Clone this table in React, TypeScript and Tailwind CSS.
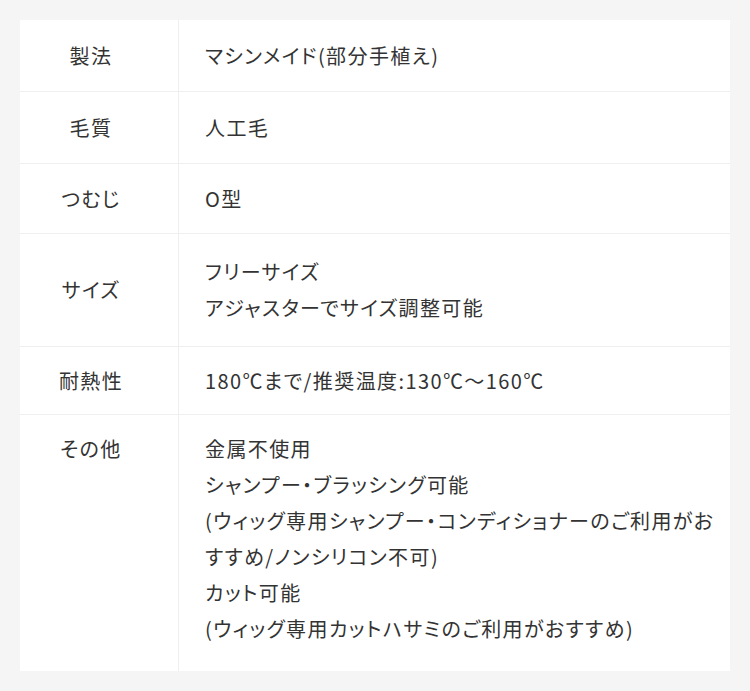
import React from "react";

type Row = { label: string; lines: string[]; h: string; top?: boolean };

const rows: Row[] = [
  { label: "製法", lines: ["マシンメイド(部分手植え)"], h: "h-[71px]" },
  { label: "毛質", lines: ["人工毛"], h: "h-[71px]" },
  { label: "つむじ", lines: ["O型"], h: "h-[69px]" },
  { label: "サイズ", lines: ["フリーサイズ", "アジャスターでサイズ調整可能"], h: "h-[112px]" },
  { label: "耐熱性", lines: ["180℃まで/推奨温度:130℃〜160℃"], h: "h-[67px]" },
  {
    label: "その他",
    lines: [
      "金属不使用",
      "シャンプー・ブラッシング可能",
      "(ウィッグ専用シャンプー・コンディショナーのご利用がおすすめ/ノンシリコン不可)",
      "カット可能",
      "(ウィッグ専用カットハサミのご利用がおすすめ)",
    ],
    h: "h-[256px]",
    top: true,
  },
];

export default function App() {
  return (
    <div
      className="w-[750px] h-[691px] bg-[#f5f5f5] p-5 text-[#333] text-[20px] tracking-[0.07em] [font-feature-settings:'palt']"
      style={{ fontFamily: '"Noto Sans CJK JP", "Noto Sans", sans-serif' }}
    >
      <div className="bg-white flex flex-col">
        {rows.map((r, i) => (
          <div
            key={i}
            className={i < rows.length - 1 ? "flex border-b border-[#efefef]" : "flex"}
          >
            <div
              className={`w-[158px] shrink-0 flex justify-center pr-4 leading-[36px] ${r.h} ${
                r.top ? "items-start pt-[16px]" : "items-center"
              }`}
            >
              {r.label}
            </div>
            <div
              className={`flex-1 border-l border-[#efefef] pl-[26px] pr-2 flex flex-col leading-[36px] ${r.h} ${
                r.top ? "justify-start pt-[16px]" : "justify-center"
              }`}
            >
              {r.lines.map((l, j) => (
                <div key={j}>{l}</div>
              ))}
            </div>
          </div>
        ))}
      </div>
    </div>
  );
}
